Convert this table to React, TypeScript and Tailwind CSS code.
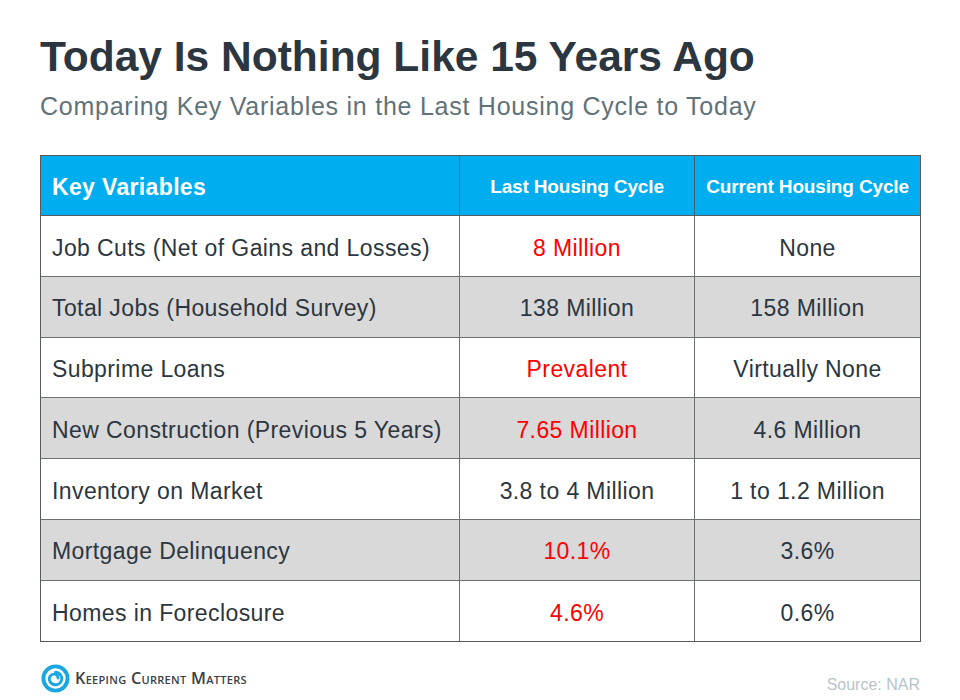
import React from "react";

const rows: { label: string; last: string; lastRed: boolean; cur: string }[] = [
  { label: "Job Cuts (Net of Gains and Losses)", last: "8 Million", lastRed: true, cur: "None" },
  { label: "Total Jobs (Household Survey)", last: "138 Million", lastRed: false, cur: "158 Million" },
  { label: "Subprime Loans", last: "Prevalent", lastRed: true, cur: "Virtually None" },
  { label: "New Construction (Previous 5 Years)", last: "7.65 Million", lastRed: true, cur: "4.6 Million" },
  { label: "Inventory on Market", last: "3.8 to 4 Million", lastRed: false, cur: "1 to 1.2 Million" },
  { label: "Mortgage Delinquency", last: "10.1%", lastRed: true, cur: "3.6%" },
  { label: "Homes in Foreclosure", last: "4.6%", lastRed: true, cur: "0.6%" },
];

function Logo() {
  return (
    <svg width="29" height="29" viewBox="0 0 30 30">
      <circle cx="15" cy="15" r="12.5" fill="none" stroke="#1aa7e0" strokeWidth="4" />
      <path d="M15 8.5 A6.5 6.5 0 1 1 8.6 16 A5 5 0 0 1 13.5 10.5 A3.8 3.8 0 0 1 17.6 14.5" fill="none" stroke="#1aa7e0" strokeWidth="3" strokeLinecap="round" />
    </svg>
  );
}

export default function App() {
  return (
    <div className="w-[960px] h-[700px] bg-white relative overflow-hidden" style={{ fontFamily: '"Liberation Sans", Arial, sans-serif' }}>
      <div className="pl-[40px] pt-[32px]">
        <h1 className="text-[42.5px] leading-[50px] font-bold text-[#2c3640]">Today Is Nothing Like 15 Years Ago</h1>
        <p className="text-[25px] leading-[30px] tracking-[0.75px] text-[#5f7279] mt-[9px]">Comparing Key Variables in the Last Housing Cycle to Today</p>
      </div>
      <div className="ml-[40px] mt-[34px] w-[881px] border border-[#555b60] text-[#2c3640]">
        <div className="grid grid-cols-[419px_235px_225px] h-[60px] bg-[#00aeef] text-white font-bold border-b border-[#555b60]">
          <div className="flex items-center pl-[11px] pt-[4px] text-[23px] tracking-[0.35px] border-r border-[#555b60]">Key Variables</div>
          <div className="flex items-center justify-center pt-[4px] text-[19px] tracking-[-0.15px] border-r border-[#555b60]">Last Housing Cycle</div>
          <div className="flex items-center justify-center pt-[4px] text-[19px] tracking-[-0.15px]">Current Housing Cycle</div>
        </div>
        {rows.map((r, i) => (
          <div
            key={i}
            className={`grid grid-cols-[419px_235px_225px] h-[60.75px] text-[23px] tracking-[0.4px] ${i % 2 === 1 ? "bg-[#d9d9d9]" : "bg-white"} ${i < rows.length - 1 ? "border-b border-[#6b7075]" : ""}`}
          >
            <div className="flex items-center pl-[11px] pt-[4px] border-r border-[#6b7075]">{r.label}</div>
            <div className={`flex items-center justify-center pt-[4px] border-r border-[#6b7075] ${r.lastRed ? "text-[#ff0000]" : ""}`}>{r.last}</div>
            <div className="flex items-center justify-center pt-[4px]">{r.cur}</div>
          </div>
        ))}
      </div>
      <div className="absolute left-[41px] top-[664px] flex items-center gap-[5px]">
        <Logo />
        <span className="text-[16.2px] font-semibold text-[#3a4045] tracking-[0.3px]" style={{ fontFamily: '"Open Sans", sans-serif', fontVariant: "small-caps" }}>
          Keeping Current Matters
        </span>
      </div>
      <div className="absolute right-[40px] top-[673px] text-[16px] text-[#b9c4ca]">Source: NAR</div>
    </div>
  );
}
